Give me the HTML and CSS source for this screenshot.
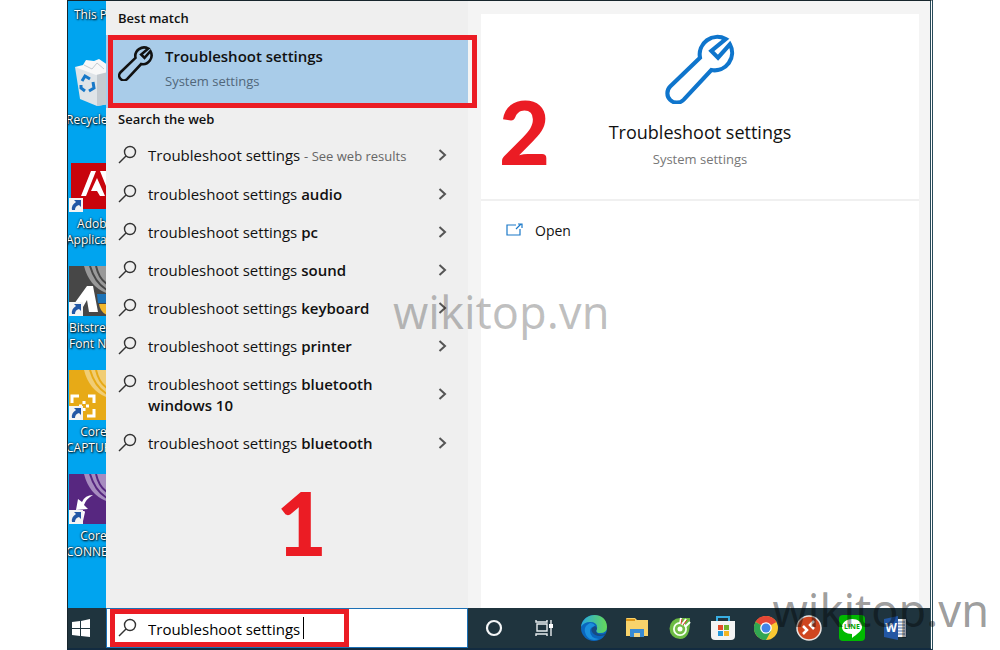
FILE: index.html
```
<!DOCTYPE html>
<html lang="en">
<head>
<meta charset="utf-8">
<title>Troubleshoot settings</title>
<link rel="stylesheet" href="styles.css">
</head>
<body>
<svg class="defs" width="0" height="0">
  <symbol id="wrench" viewBox="0 0 68 68">
    <path d="M59 5A17 17 0 0 0 34 23L5 51A8.500 8.500 0 0 0 18 64L45 35A17 17 0 0 0 63 10L51.500 23L45 16.500Z" fill="none" stroke="currentColor" stroke-linejoin="miter"/>
  </symbol>
  <symbol id="search" viewBox="0 0 20 20">
    <circle cx="12" cy="7" r="5.500" fill="none" stroke="currentColor" stroke-width="1.400"/>
    <path d="M8 11L1 18" stroke="currentColor" stroke-width="1.400"/>
  </symbol>
  <symbol id="chevron" viewBox="0 0 10 14">
    <path d="M1.500 1L7 6L1.500 11" fill="none" stroke="currentColor" stroke-width="2"/>
  </symbol>
  <symbol id="shortcut" viewBox="0 0 14 14">
    <rect width="14" height="14" fill="#f4f4f4"/>
    <path d="M5 2h7v7l-2-2q-4 1-4 5H3q-1-5 4-8z" fill="#2257a5"/>
  </symbol>
</svg>

<div class="screen">
  <div class="work">
    <nav class="desktop">
      <div class="tile tile-first"><span class="label in">This P</span></div>
      <div class="tile">
        <svg class="pic" viewBox="0 0 50 50"><path d="M6 9L40 12V46L28 48L11 41Z" fill="#dfe4e8"/><path d="M28 16L40 12V46L28 48Z" fill="#c3cad0"/><path d="M6 9l8-2 3-5 8 1 5-2 9 6v7l-12 3z" fill="#f8f8f8"/><path d="M15 7l8 4 5-6 7 6" fill="none" stroke="#c4cbd0"/><g fill="none" stroke="#1778c8" stroke-width="3"><path d="M13 23l3-5 5 3M24 24l1 6-5 3M16 33l-4-3v-3"/></g></svg>
        <span class="label out">Recycle</span>
      </div>
      <div class="tile">
        <svg class="pic" viewBox="0 0 50 50"><rect x="2" y="1" width="48" height="46" fill="#c8040c"/><path d="M12 34L22 9h5L17 34zM31 9h6l10 25h-6zM22 29l6-13 8 18h-5l-3-5z" fill="#fff"/><use href="#shortcut" y="36" width="14" height="14"/></svg>
        <span class="label in">&nbsp;Adob</span><span class="label out">Applica</span>
      </div>
      <div class="tile">
        <svg class="pic" viewBox="0 0 50 50"><rect width="50" height="50" fill="#474747"/><path d="M15 0q5 20 22 27V0z" fill="#999"/><path d="M21 0q5 17 17 24M27 0q3 13 11 18" fill="none" stroke="#474747" stroke-width="2"/><path d="M28 28h10v9h-9z" fill="#1d73b7"/><path d="M30 38h8v11q-7-3-8-11" fill="#f3b72b"/><path d="M5 38l13-18h6l5 26h-9l-2-12-4 7z" fill="#fff"/><use href="#shortcut" y="36" width="14" height="14"/></svg>
        <span class="label">Bitstrea</span><span class="label">Font N</span>
      </div>
      <div class="tile">
        <svg class="pic" viewBox="0 0 50 50"><rect width="50" height="50" fill="#e7aa17"/><path d="M15 0q5 20 22 27V0z" fill="#f1cd74"/><path d="M21 0q5 17 17 24M27 0q3 13 11 18" fill="none" stroke="#e7aa17" stroke-width="2"/><path d="M3 33v-7h7M19 26h6v7M25 39v7h-7M10 36h3M15 31v3M17 36h3M15 38v3" fill="none" stroke="#fff" stroke-width="3"/><use href="#shortcut" y="36" width="14" height="14"/></svg>
        <span class="label in">&nbsp; Core</span><span class="label out">CAPTUR</span>
      </div>
      <div class="tile">
        <svg class="pic" viewBox="0 0 50 50"><rect width="50" height="50" fill="#572780"/><path d="M15 0q5 20 22 27V0z" fill="#a78cc0"/><path d="M21 0q5 17 17 24M27 0q3 13 11 18" fill="none" stroke="#572780" stroke-width="2"/><path d="M24 21q-8 0-11 7l-4-3-2 11 12-1-4-4q2-6 9-10zM11 37h5l-2 3zM16 38l-2 9h-3l2-9z" fill="#fff"/><use href="#shortcut" y="36" width="14" height="14"/></svg>
        <span class="label in">&nbsp; Core</span><span class="label out">CONNEC</span>
      </div>
    </nav>

    <section class="results">
      <h2>Best match</h2>
      <a class="best" href="#">
        <svg class="best-icon"><use href="#wrench"/></svg>
        <span class="best-text"><strong>Troubleshoot settings</strong><small>System settings</small></span>
      </a>
      <h2>Search the web</h2>
      <ul class="web">
        <li><a href="#"><svg class="find"><use href="#search"/></svg><span class="term">Troubleshoot settings <small>- See web results</small></span><svg class="go"><use href="#chevron"/></svg></a></li>
        <li><a href="#"><svg class="find"><use href="#search"/></svg><span class="term">troubleshoot settings <b>audio</b></span><svg class="go"><use href="#chevron"/></svg></a></li>
        <li><a href="#"><svg class="find"><use href="#search"/></svg><span class="term">troubleshoot settings <b>pc</b></span><svg class="go"><use href="#chevron"/></svg></a></li>
        <li><a href="#"><svg class="find"><use href="#search"/></svg><span class="term">troubleshoot settings <b>sound</b></span><svg class="go"><use href="#chevron"/></svg></a></li>
        <li><a href="#"><svg class="find"><use href="#search"/></svg><span class="term">troubleshoot settings <b>keyboard</b></span><svg class="go"><use href="#chevron"/></svg></a></li>
        <li><a href="#"><svg class="find"><use href="#search"/></svg><span class="term">troubleshoot settings <b>printer</b></span><svg class="go"><use href="#chevron"/></svg></a></li>
        <li><a href="#"><svg class="find"><use href="#search"/></svg><span class="term">troubleshoot settings <b>bluetooth<br>windows 10</b></span><svg class="go"><use href="#chevron"/></svg></a></li>
        <li><a href="#"><svg class="find"><use href="#search"/></svg><span class="term">troubleshoot settings <b>bluetooth</b></span><svg class="go"><use href="#chevron"/></svg></a></li>
      </ul>
      <span class="step step-one">1</span>
    </section>

    <section class="preview">
      <div class="card">
        <div class="hero">
          <svg class="hero-icon"><use href="#wrench"/></svg>
          <h1>Troubleshoot settings</h1>
          <p>System settings</p>
          <span class="step step-two">2</span>
        </div>
        <a class="open" href="#">
          <svg width="18" height="16" viewBox="0 0 18 16"><path d="M11 2H2v10h13V6M11 6l5-5M13 1h4v4" fill="none" stroke="#1a78c8" stroke-width="1.200"/></svg>
          Open
        </a>
      </div>
    </section>
  </div>

  <footer class="taskbar">
    <button class="start" aria-label="Start"><svg width="18" height="18" viewBox="0 0 18 18"><path d="M0 3l8-1v7H0zM9 2l9-2v9H9zM0 10h8v7l-8-1zM9 10h9v8l-9-1z" fill="#fff"/></svg></button>
    <label class="searchbox">
      <svg class="find"><use href="#search"/></svg>
      <input type="text" value="Troubleshoot settings" aria-label="Search">
    </label>
    <div class="tools">
      <button aria-label="Cortana"><svg width="18" height="18" viewBox="0 0 18 18"><circle cx="9" cy="9" r="7" fill="none" stroke="#f4f6f7" stroke-width="2.200"/></svg></button>
      <button aria-label="Task view"><svg width="20" height="18" viewBox="0 0 20 18"><path d="M1 1v2h11V1M1 17v-2h11v2M2 5h10v7H2zM16 1v4M16 9v8" fill="none" stroke="#e8edef" stroke-width="1.400"/><path d="M14 5h4v4h-4z" fill="#fff"/></svg></button>
    </div>
    <div class="apps">
      <button aria-label="Edge"><svg width="26" height="26" viewBox="0 0 26 26"><defs><linearGradient id="eg"><stop stop-color="#28a9e0"/><stop offset="1" stop-color="#65d957"/></linearGradient></defs><circle cx="13" cy="13" r="13" fill="#0b66bd"/><path d="M0 12C2-4 26-4 26 12q0 6-7 6-5 0-3-4 1-7-7-7-6 0-9 5" fill="url(#eg)"/><path d="M9 8q-8 4-4 12 4 7 13 4-9-1-9-8 0-4 5-5-1-3-5-3" fill="#1a8fdd"/><path d="M14 11q-5 2-3 6 4 6 13 3l1-2q-5 3-9 0-2-2 0-4 0-2-2-3" fill="#174a82"/></svg></button>
      <button aria-label="File Explorer"><svg width="24" height="22" viewBox="0 0 24 22"><path d="M1 2q0-1 1-1h8l2 2h11v16H1z" fill="#f8d36b"/><path d="M1 2h9v2H1z" fill="#dd9618"/><path d="M5 20v-8h14v8h-4v-4H9v4z" fill="#398bd4"/><path d="M9 16h6v4H9z" fill="#f3d789"/></svg></button>
      <button aria-label="Coc Coc"><svg width="24" height="24" viewBox="0 0 24 24"><path d="M22 2q1 21-10 21A10.500 10.500 0 1 1 12 2z" fill="#6cbb43"/><circle cx="12" cy="13" r="7" fill="#f5fff0"/><circle cx="12" cy="13" r="5.200" fill="#74bd47"/><circle cx="12" cy="13" r="2.500" fill="#fff"/><path d="M12 8l1-6M14 9l4-6M17 11l5-5" stroke="#fff" stroke-width="2"/><path d="M13 8l1-5M15 9l4-5" stroke="#dc3829"/></svg></button>
      <button aria-label="Store"><svg width="26" height="26" viewBox="0 0 26 26"><path d="M7 7V2h12v5" fill="none" stroke="#38aee2" stroke-width="2"/><path d="M1 6h24v15q0 4-4 4H5q-4 0-4-4z" fill="#f4f4f4"/><path d="M8 10h5v5H8z" fill="#e44d2b"/><path d="M14 10h5v5h-5z" fill="#73b42c"/><path d="M8 16h5v5H8z" fill="#2399dc"/><path d="M14 16h5v5h-5z" fill="#f4b624"/></svg></button>
      <button aria-label="Chrome"><svg width="24" height="24" viewBox="0 0 24 24"><circle cx="12" cy="12" r="12" fill="#fac832"/><path d="M12 12L1.600 6A12 12 0 0 1 22.400 6z" fill="#e54736"/><path d="M1.600 6A12 12 0 0 0 12 24l5-9-5-3z" fill="#31a652"/><circle cx="12" cy="12" r="5.800" fill="#fff"/><circle cx="12" cy="12" r="4.500" fill="#4285e8"/></svg></button>
      <button aria-label="Remote Desktop"><svg width="26" height="26" viewBox="0 0 26 26"><circle cx="13" cy="13" r="12" fill="#cf4620" stroke="#e9e4e1" stroke-width="1.500"/><path d="M7 11l4 4-4 4M18 6l-4 4 4 4" fill="none" stroke="#fff" stroke-width="2.500"/></svg></button>
      <button aria-label="Line"><svg width="26" height="26" viewBox="0 0 26 26"><rect width="26" height="26" rx="4" fill="#00b900"/><path d="M13 4c6 0 10 3 10 8 0 4-5 7-10 11v-4C7 19 3 16 3 12s4-8 10-8" fill="#fff"/><text x="13" y="14" text-anchor="middle" class="line-text">LINE</text></svg></button>
      <button aria-label="Word"><svg width="24" height="24" viewBox="0 0 24 24"><path d="M13 3h10v18H13z" fill="#f0f4fa"/><path d="M14 6h8M14 9h8M14 12h8M14 15h8M14 18h8" stroke="#5274ac"/><path d="M1 3l14-3v24L1 21z" fill="#2357a4"/><text x="8" y="16" text-anchor="middle" class="word-text">W</text></svg></button>
    </div>
  </footer>
  <span class="mark mark-center">wikitop.vn</span>
  <span class="mark mark-corner">wikitop.vn</span>
</div>
</body>
</html>
```
FILE: styles.css
```
* {box-sizing: border-box;}
body {margin: 0; background: #fff; color: #111; font-family: "Open Sans", "Noto Sans", sans-serif; font-size: 15px;}
a {color: inherit; text-decoration: none;}
button {border: 0; padding: 0; background: none; display: flex; align-items: center; justify-content: center;}
h1, h2, p, ul {margin: 0; padding: 0;}
.defs {position: absolute;}

.screen {
  position: relative;
  min-height: 100vh;
  margin: 0 67px;
  display: flex;
  flex-direction: column;
  border: 1px solid #17252c;
  border-right: 3px double #294b59;
  border-bottom: 2px solid #122b40;
}
.work {flex: 1; display: flex;}

/* desktop strip */
.desktop {width: 38px; overflow: hidden; background: #00a4ef; color: #fff; font-size: 12px; line-height: 16px;}
.tile {height: 104px; padding-left: 1px;}
.tile-first {height: 57px; padding-top: 6px;}
.pic {display: block; width: 50px; height: 50px; margin-bottom: 4px;}
.label {display: block; white-space: nowrap; text-shadow: 1px 1px 2px #000, 0 0 2px #000;}
.label.in {padding-left: 5px;}
.label.out {margin-left: -3px;}

/* result list */
.results {position: relative; width: 362px; background: #efefef;}
.results h2 {padding: 6px 12px; font-size: 13px; line-height: 22px; font-weight: 600;}
.best {
  position: relative;
  z-index: 1;
  height: 73px;
  display: flex;
  padding: 11px 12px;
  gap: 12px;
  background: #a9cce9;
}
.best::after {content: ""; position: absolute; inset: 0 -9px 0 2px; border: 5px solid #eb1c24;}
.best-icon {width: 35px; height: 35px; stroke-width: 5px;}
.best-text {display: flex; flex-direction: column; line-height: 20px; gap: 5px;}
.best strong {font-weight: 600;}
.best small {font-size: 13px; color: #51677a;}
.best + h2 {padding: 0 12px 6px;}
.web {list-style: none;}
.web a {display: flex; padding: 9px 20px 8px 12px; line-height: 21px;}
.web b {font-weight: 600;}
.web small {font-size: 13px; color: #666;}
.term {flex: 1; padding-left: 10px;}
.find {width: 20px; height: 20px; color: #333;}
.go {width: 10px; height: 14px; align-self: center; color: #555;}

.step {position: absolute; color: #eb1c24; font: 900 88px/90px Lato, sans-serif;}
.step-one {left: 170px; bottom: 41px;}
.step-two {left: 18px; top: 72px;}

/* preview */
.preview {flex: 1; display: flex; padding: 13px 11px 0 13px; background: #f4f4f4;}
.card {flex: 1; background: #fff;}
.hero {
  position: relative;
  height: 187px;
  padding-top: 20px;
  border-bottom: 2px solid #f0f0f0;
  display: flex;
  flex-direction: column;
  align-items: center;
}
.hero-icon {width: 70px; height: 70px; color: #0f75cc; stroke-width: 4px;}
.hero h1 {margin-top: 14px; font-size: 18px; line-height: 28px; font-weight: 400;}
.hero p {margin-top: 3px; font-size: 13px; line-height: 20px; color: #777;}
.open {display: flex; align-items: center; gap: 12px; padding: 18px 24px; font-size: 14px; line-height: 24px;}

/* taskbar */
.taskbar {height: 40px; display: flex; background: #1f343e;}
.start {width: 26px; margin-right: 12px;}
.searchbox {width: 362px; position: relative; display: flex; align-items: center; padding-left: 11px; gap: 10px; background: #fff; border: 1px solid #1c70b5;}
.searchbox::after {content: ""; position: absolute; inset: 0 118px 0 3px; border: 5px solid #eb1c24;}
.searchbox input {width: 156px; height: 22px; padding: 1px 0 0; border: 0; border-right: 1px solid #000; outline: 0; background: none; font: inherit;}
.tools {display: flex;}
.tools button {width: 51px;}
.apps {flex: 1; display: flex; padding-left: 2px;}
.apps button {width: 43px;}
.line-text {font: bold 7px "Open Sans", sans-serif; fill: #00a800;}
.word-text {font: bold 12px "Open Sans", sans-serif; fill: #fff;}

.mark {position: absolute; z-index: 2; font: 45px/60px "Noto Sans", sans-serif; pointer-events: none;}
.mark-center {left: 325px; top: 281px; color: rgba(0, 0, 0, .25);}
.mark-corner {right: -59px; bottom: 8px; color: rgba(0, 0, 0, .4);}
```
